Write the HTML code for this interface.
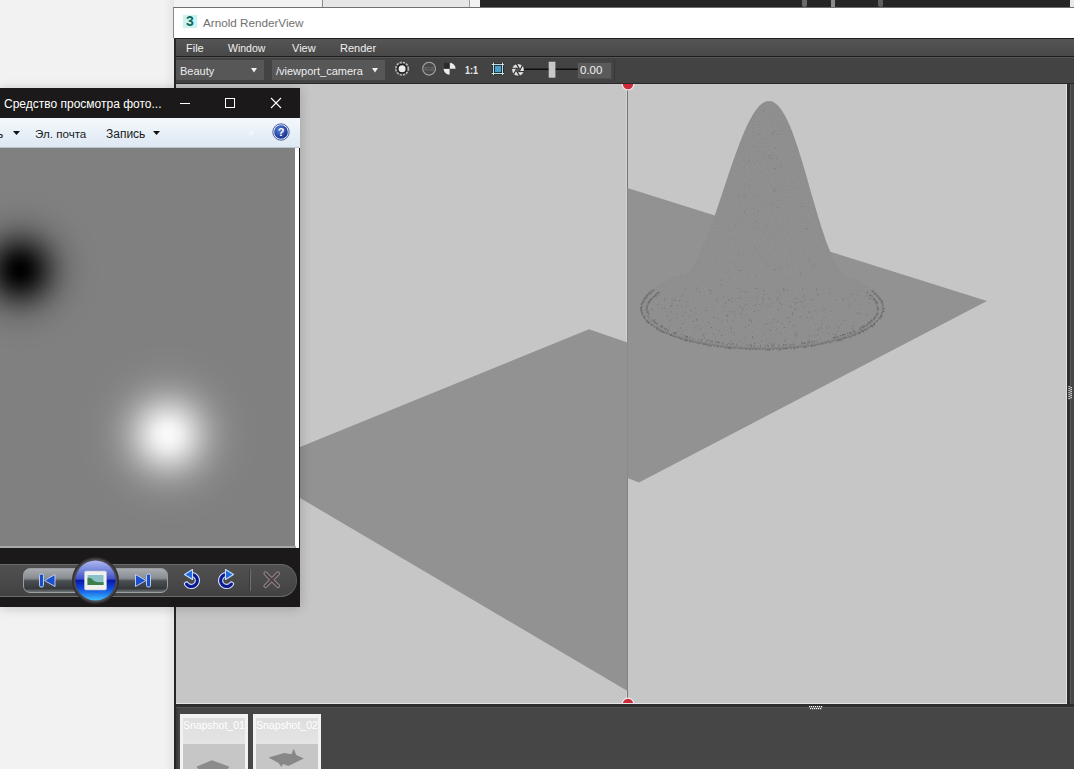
<!DOCTYPE html>
<html><head><meta charset="utf-8">
<style>
*{margin:0;padding:0;box-sizing:border-box}
html,body{width:1074px;height:769px;overflow:hidden;background:#f2f2f2;font-family:"Liberation Sans",sans-serif}
.a{position:absolute}
.t{position:absolute;white-space:nowrap;line-height:1}
</style></head><body>
<!-- ===== desktop background ===== -->
<div class="a" style="left:0;top:0;width:1074px;height:769px;background:#f2f2f2"></div>
<div class="a" style="left:322px;top:0;width:148px;height:8px;background:#e6e6e6;border-left:1px solid #8c8c8c;border-right:1px solid #9c9c9c"></div>
<div class="a" style="left:480px;top:0;width:590px;height:8px;background:#252525;border-bottom:1px solid #111"></div>
<div class="a" style="left:1070px;top:0;width:4px;height:8px;background:#e8e8e8"></div>
<div class="a" style="left:802px;top:0;width:5px;height:7px;background:#6a6a6a;border-radius:0 0 3px 3px"></div>
<div class="a" style="left:831px;top:0;width:4px;height:7px;background:#8a8a8a"></div>
<div class="a" style="left:878px;top:0;width:5px;height:7px;background:#5e5e5e;border-radius:0 0 3px 3px"></div>

<!-- ===== Arnold window ===== -->
<div class="a" style="left:164px;top:0;width:10px;height:769px;background:linear-gradient(90deg,rgba(0,0,0,0),rgba(0,0,0,0.05))"></div>
<div class="a" style="left:174px;top:38px;width:900px;height:731px;background:#474747;border-left:2px solid #262626"></div>
<div class="a" style="left:173px;top:7px;width:901px;height:31px;background:#fff;border-left:1px solid #8a8a8a;border-top:1px solid #707070"></div>
<!-- app icon -->
<div class="a" style="left:183px;top:15px;width:14px;height:13px;background:#cdf2ef;box-shadow:0 0 1px #dff"></div>
<div class="t" style="left:186px;top:14px;font-size:14px;font-weight:bold;color:#0a6e62">3</div>
<div class="t" style="left:203px;top:17px;font-size:11.7px;color:#707070">Arnold RenderView</div>
<!-- menu bar -->
<div class="a" style="left:176px;top:38px;width:898px;height:19px;background:linear-gradient(#555,#484848);border-top:1px solid #1e1e1e;border-bottom:1px solid #1e1e1e"></div>
<div class="t" style="left:186px;top:43px;font-size:11px;color:#f0f0f0">File</div>
<div class="t" style="left:228px;top:43px;font-size:10.5px;color:#f0f0f0">Window</div>
<div class="t" style="left:292px;top:43px;font-size:11px;color:#f0f0f0">View</div>
<div class="t" style="left:340px;top:43px;font-size:11px;color:#f0f0f0">Render</div>
<!-- toolbar -->
<div class="a" style="left:176px;top:57px;width:898px;height:27px;background:#434343;border-top:1px solid #555;border-bottom:1px solid #2a2a2a"></div>
<div class="a" style="left:614px;top:59px;width:1px;height:22px;background:#383838"></div>
<div class="a" style="left:176px;top:60px;width:88px;height:20px;background:#575757"></div>
<div class="t" style="left:180px;top:66px;font-size:11px;color:#eee">Beauty</div>
<svg class="a" style="left:251px;top:68px" width="6" height="5"><polygon points="0,0 6,0 3,4.5" fill="#f0f0f0"/></svg>
<div class="a" style="left:272px;top:60px;width:113px;height:20px;background:#575757"></div>
<div class="t" style="left:276px;top:66px;font-size:11px;color:#eee">/viewport_camera</div>
<svg class="a" style="left:372px;top:68px" width="6" height="5"><polygon points="0,0 6,0 3,4.5" fill="#f0f0f0"/></svg>
<!-- toolbar icons -->
<svg class="a" style="left:390px;top:57px" width="240" height="27">
 <circle cx="12.1" cy="11.7" r="6.3" fill="none" stroke="#b8b8b8" stroke-width="1.6" stroke-dasharray="2.2 1.1"/>
 <circle cx="12.1" cy="11.7" r="4.9" fill="#1e1e1e"/>
 <circle cx="12.1" cy="11.7" r="3.5" fill="#ececec"/>
 <circle cx="39.1" cy="11.7" r="6.4" fill="#4a4a4a" stroke="#a8a8a8" stroke-width="1.1"/>
 <text x="39.1" y="13.5" font-size="4.5" fill="#777" text-anchor="middle" font-family="Liberation Sans">RGB</text>
 <path d="M59.6 11.7 V5.7 A6 6 0 0 1 65.6 11.7 Z M59.6 11.7 H53.6 A6 6 0 0 0 59.6 17.7 Z" fill="#ececec"/>
 <path d="M59.6 11.7 V5.7 H54.2 V11.7 Z" fill="#2a2a2a"/>
 <text x="75" y="16.5" font-size="10.5" font-weight="bold" fill="#e8e8e8" font-family="Liberation Sans" textLength="13" lengthAdjust="spacingAndGlyphs">1:1</text>
 <path d="M101.7 7.4h12.3M101.7 16.6h12.3M103.4 5.5v12.7M112.6 5.5v12.7" stroke="#111" stroke-width="2.4"/>
 <path d="M101.7 7.4h12.3M101.7 16.6h12.3M103.4 5.5v12.7M112.6 5.5v12.7" stroke="#d8f4f2" stroke-width="1"/>
 <rect x="104.6" y="8.6" width="6.8" height="6.8" fill="#4a9ec8" stroke="#0a2a40" stroke-width="0.6"/>
 <circle cx="128" cy="12.9" r="6.2" fill="#e2e2e2" stroke="#2a2a2a" stroke-width="0.6"/>
 <path d="M133.99 14.50L126.74 14.70 M129.60 18.89L125.81 12.71 M123.62 17.28L127.07 10.91 M122.01 11.30L129.26 11.10 M126.40 6.91L130.19 13.09 M132.38 8.52L128.93 14.89" stroke="#2a2a2a" stroke-width="1.1"/>
 <circle cx="128" cy="12.9" r="1.6" fill="#555"/>
 <rect x="134" y="11.5" width="54" height="1.5" fill="#111"/>
 <rect x="158.7" y="4.7" width="6.7" height="16" fill="#c8c8c8"/>
 <rect x="187.8" y="5.8" width="33.5" height="15.7" fill="#5a5a5a"/>
</svg>
<div class="t" style="left:580px;top:65px;font-size:11.5px;color:#f0f0f0">0.00</div>

<!-- ===== viewport ===== -->
<div class="a" style="left:176px;top:84px;width:891px;height:620px;background:#c6c6c6"></div>
<svg class="a" style="left:0;top:0" width="1074" height="769">
 <defs>
  <clipPath id="vp"><rect x="176" y="84" width="891" height="619.5"/></clipPath>
  <filter id="nz" x="0" y="0" width="100%" height="100%"><feTurbulence type="fractalNoise" baseFrequency="0.7" numOctaves="2" seed="7"/><feColorMatrix values="0 0 0 0 0.3  0 0 0 0 0.3  0 0 0 0 0.3  0 0 0 -9 5.2"/><feComposite in2="SourceGraphic" operator="in"/></filter>
 </defs>
 <g clip-path="url(#vp)">
 <rect x="627" y="84" width="1" height="620" fill="#767676"/>
 <rect x="626" y="84" width="1" height="620" fill="#d2d2d2"/>
 <polygon points="589,329.3 627.5,342.4 627.5,691 248.8,467.8" fill="#929292"/>
 <polygon points="627.5,188 987,301 639,482.5 627.5,478" fill="#929292"/>
 <path id="cone" d="M659.7 296.0 L672.6 290.0 L683.7 280.0 L692.2 268.0 L699.1 255.0 L705.7 240.0 L711.4 225.0 L716.7 210.0 L721.4 196.0 L725.7 183.0 L729.7 171.0 L733.5 160.0 L737.1 150.0 L740.5 141.0 L743.8 133.0 L746.9 126.0 L749.9 120.0 L752.7 115.0 L755.3 111.0 L757.6 108.0 L759.4 106.0 L761.6 104.0 L763.0 103.0 L764.8 102.0 L765.7 101.6 L766.7 101.3 L771.3 101.3 L772.2 101.6 L773.2 102.0 L774.9 103.0 L776.2 104.0 L778.3 106.0 L780.0 108.0 L782.2 111.0 L784.6 115.0 L787.2 120.0 L789.9 126.0 L792.7 133.0 L795.5 141.0 L798.5 150.0 L801.6 160.0 L804.9 171.0 L808.3 183.0 L812.0 196.0 L816.1 210.0 L820.6 225.0 L825.6 240.0 L831.5 255.0 L837.8 268.0 L845.7 280.0 L856.3 290.0 L868.9 296.0 Z" fill="#8d8d8d"/><ellipse cx="762" cy="306" rx="121" ry="42" fill="#8d8d8d"/>
 <g filter="url(#nz)" opacity="0.55"><path d="M659.7 296.0 L672.6 290.0 L683.7 280.0 L692.2 268.0 L699.1 255.0 L705.7 240.0 L711.4 225.0 L716.7 210.0 L721.4 196.0 L725.7 183.0 L729.7 171.0 L733.5 160.0 L737.1 150.0 L740.5 141.0 L743.8 133.0 L746.9 126.0 L749.9 120.0 L752.7 115.0 L755.3 111.0 L757.6 108.0 L759.4 106.0 L761.6 104.0 L763.0 103.0 L764.8 102.0 L765.7 101.6 L766.7 101.3 L771.3 101.3 L772.2 101.6 L773.2 102.0 L774.9 103.0 L776.2 104.0 L778.3 106.0 L780.0 108.0 L782.2 111.0 L784.6 115.0 L787.2 120.0 L789.9 126.0 L792.7 133.0 L795.5 141.0 L798.5 150.0 L801.6 160.0 L804.9 171.0 L808.3 183.0 L812.0 196.0 L816.1 210.0 L820.6 225.0 L825.6 240.0 L831.5 255.0 L837.8 268.0 L845.7 280.0 L856.3 290.0 L868.9 296.0 Z" fill="#000"/><ellipse cx="762" cy="306" rx="121" ry="42" fill="#000"/></g>
 <path d="M871.7 290.7 A121 41 0 1 1 652.3 290.7" fill="none" stroke="#747474" stroke-width="1.4" stroke-dasharray="2.5 1"/>
 <path d="M866.5 295 A115.5 37 0 1 1 657.5 295" fill="none" stroke="#7a7a7a" stroke-width="1" stroke-dasharray="2 1.5"/>
 <g id="spk"><rect x="675.5" y="317.0" width="1" height="1" fill="#7a7a7a"/><rect x="655.2" y="319.3" width="1" height="1" fill="#727272"/><rect x="796.6" y="334.9" width="1" height="1" fill="#808080"/><rect x="722.6" y="296.4" width="1" height="1" fill="#7a7a7a"/><rect x="750.0" y="319.7" width="1" height="1" fill="#828282"/><rect x="697.3" y="324.8" width="1" height="1" fill="#7f7f7f"/><rect x="776.9" y="299.0" width="1" height="1" fill="#6d6d6d"/><rect x="783.8" y="326.8" width="1" height="1" fill="#6c6c6c"/><rect x="717.0" y="298.2" width="1" height="1" fill="#737373"/><rect x="740.7" y="348.3" width="1" height="1" fill="#6e6e6e"/><rect x="770.3" y="329.9" width="1" height="1" fill="#6e6e6e"/><rect x="725.3" y="302.8" width="1" height="1" fill="#6f6f6f"/><rect x="869.5" y="298.2" width="1" height="1" fill="#6c6c6c"/><rect x="788.5" y="346.4" width="1" height="1" fill="#6d6d6d"/><rect x="644.3" y="315.6" width="1" height="1" fill="#787878"/><rect x="682.3" y="322.9" width="1" height="1" fill="#727272"/><rect x="821.6" y="320.3" width="1" height="1" fill="#797979"/><rect x="764.1" y="293.9" width="1" height="1" fill="#737373"/><rect x="758.6" y="303.9" width="1" height="1" fill="#7a7a7a"/><rect x="776.9" y="291.5" width="1" height="1" fill="#7d7d7d"/><rect x="794.6" y="335.1" width="1" height="1" fill="#707070"/><rect x="696.5" y="320.3" width="1" height="1" fill="#787878"/><rect x="713.0" y="317.0" width="1" height="1" fill="#747474"/><rect x="814.0" y="310.2" width="1" height="1" fill="#7f7f7f"/><rect x="737.9" y="297.9" width="1" height="1" fill="#707070"/><rect x="776.1" y="328.3" width="1" height="1" fill="#7f7f7f"/><rect x="730.6" y="327.6" width="1" height="1" fill="#6e6e6e"/><rect x="811.4" y="316.4" width="1" height="1" fill="#808080"/><rect x="766.1" y="339.8" width="1" height="1" fill="#777777"/><rect x="730.9" y="297.8" width="1" height="1" fill="#7e7e7e"/><rect x="670.8" y="311.2" width="1" height="1" fill="#787878"/><rect x="781.5" y="322.7" width="1" height="1" fill="#737373"/><rect x="787.0" y="289.4" width="1" height="1" fill="#727272"/><rect x="814.2" y="335.3" width="1" height="1" fill="#7d7d7d"/><rect x="800.8" y="345.7" width="1" height="1" fill="#7b7b7b"/><rect x="699.5" y="291.9" width="1" height="1" fill="#6f6f6f"/><rect x="829.1" y="326.6" width="1" height="1" fill="#747474"/><rect x="769.4" y="342.3" width="1" height="1" fill="#747474"/><rect x="660.9" y="326.6" width="1" height="1" fill="#7b7b7b"/><rect x="748.3" y="324.5" width="1" height="1" fill="#6e6e6e"/><rect x="820.7" y="328.2" width="1" height="1" fill="#808080"/><rect x="740.1" y="346.6" width="1" height="1" fill="#727272"/><rect x="761.8" y="297.2" width="1" height="1" fill="#797979"/><rect x="734.0" y="311.4" width="1" height="1" fill="#717171"/><rect x="744.4" y="337.3" width="1" height="1" fill="#707070"/><rect x="799.7" y="316.3" width="1" height="1" fill="#7a7a7a"/><rect x="859.3" y="303.9" width="1" height="1" fill="#828282"/><rect x="645.4" y="302.5" width="1" height="1" fill="#7e7e7e"/><rect x="777.8" y="309.2" width="1" height="1" fill="#777777"/><rect x="857.7" y="312.4" width="1" height="1" fill="#7b7b7b"/><rect x="823.5" y="317.4" width="1" height="1" fill="#707070"/><rect x="795.2" y="308.0" width="1" height="1" fill="#7d7d7d"/><rect x="744.8" y="314.4" width="1" height="1" fill="#828282"/><rect x="843.5" y="337.3" width="1" height="1" fill="#767676"/><rect x="702.2" y="335.2" width="1" height="1" fill="#6e6e6e"/><rect x="815.9" y="288.8" width="1" height="1" fill="#6c6c6c"/><rect x="709.1" y="290.1" width="1" height="1" fill="#7e7e7e"/><rect x="794.4" y="308.9" width="1" height="1" fill="#6e6e6e"/><rect x="682.7" y="330.7" width="1" height="1" fill="#7e7e7e"/><rect x="682.6" y="315.3" width="1" height="1" fill="#7d7d7d"/><rect x="852.6" y="325.8" width="1" height="1" fill="#6c6c6c"/><rect x="748.8" y="319.3" width="1" height="1" fill="#6c6c6c"/><rect x="774.5" y="342.0" width="1" height="1" fill="#7b7b7b"/><rect x="647.9" y="311.3" width="1" height="1" fill="#777777"/><rect x="730.6" y="340.0" width="1" height="1" fill="#727272"/><rect x="657.6" y="303.9" width="1" height="1" fill="#767676"/><rect x="815.8" y="293.3" width="1" height="1" fill="#818181"/><rect x="761.6" y="340.7" width="1" height="1" fill="#727272"/><rect x="816.8" y="290.6" width="1" height="1" fill="#7e7e7e"/><rect x="810.7" y="299.0" width="1" height="1" fill="#707070"/><rect x="651.3" y="308.8" width="1" height="1" fill="#6d6d6d"/><rect x="753.7" y="324.6" width="1" height="1" fill="#7a7a7a"/><rect x="647.5" y="315.1" width="1" height="1" fill="#797979"/><rect x="697.4" y="327.9" width="1" height="1" fill="#818181"/><rect x="717.7" y="342.4" width="1" height="1" fill="#7f7f7f"/><rect x="730.4" y="311.3" width="1" height="1" fill="#6d6d6d"/><rect x="745.4" y="339.5" width="1" height="1" fill="#818181"/><rect x="723.0" y="342.0" width="1" height="1" fill="#6c6c6c"/><rect x="801.1" y="341.4" width="1" height="1" fill="#747474"/><rect x="765.6" y="323.3" width="1" height="1" fill="#6d6d6d"/><rect x="802.9" y="306.6" width="1" height="1" fill="#6f6f6f"/><rect x="740.4" y="291.2" width="1" height="1" fill="#7b7b7b"/><rect x="758.1" y="342.6" width="1" height="1" fill="#7b7b7b"/><rect x="739.5" y="306.3" width="1" height="1" fill="#737373"/><rect x="752.0" y="331.9" width="1" height="1" fill="#828282"/><rect x="842.9" y="298.5" width="1" height="1" fill="#717171"/><rect x="677.5" y="330.6" width="1" height="1" fill="#737373"/><rect x="861.7" y="328.6" width="1" height="1" fill="#787878"/><rect x="817.8" y="328.1" width="1" height="1" fill="#808080"/><rect x="769.5" y="305.8" width="1" height="1" fill="#7d7d7d"/><rect x="659.0" y="291.9" width="1" height="1" fill="#767676"/><rect x="666.9" y="315.5" width="1" height="1" fill="#727272"/><rect x="853.5" y="330.2" width="1" height="1" fill="#808080"/><rect x="799.8" y="301.4" width="1" height="1" fill="#737373"/><rect x="849.8" y="303.7" width="1" height="1" fill="#767676"/><rect x="754.4" y="342.7" width="1" height="1" fill="#6c6c6c"/><rect x="741.8" y="317.6" width="1" height="1" fill="#7a7a7a"/><rect x="719.1" y="330.3" width="1" height="1" fill="#747474"/><rect x="741.7" y="308.5" width="1" height="1" fill="#6e6e6e"/><rect x="741.6" y="311.3" width="1" height="1" fill="#7d7d7d"/><rect x="707.3" y="339.3" width="1" height="1" fill="#707070"/><rect x="643.1" y="315.5" width="1" height="1" fill="#7c7c7c"/><rect x="842.0" y="298.4" width="1" height="1" fill="#828282"/><rect x="810.8" y="317.9" width="1" height="1" fill="#7c7c7c"/><rect x="659.1" y="294.5" width="1" height="1" fill="#7d7d7d"/><rect x="733.8" y="331.4" width="1" height="1" fill="#7f7f7f"/><rect x="790.9" y="344.5" width="1" height="1" fill="#7d7d7d"/><rect x="671.5" y="303.3" width="1" height="1" fill="#727272"/><rect x="727.3" y="315.3" width="1" height="1" fill="#6c6c6c"/><rect x="746.1" y="303.8" width="1" height="1" fill="#6d6d6d"/><rect x="685.8" y="305.4" width="1" height="1" fill="#7e7e7e"/><rect x="788.6" y="316.7" width="1" height="1" fill="#717171"/><rect x="843.3" y="320.1" width="1" height="1" fill="#797979"/><rect x="857.1" y="290.5" width="1" height="1" fill="#787878"/><rect x="752.0" y="336.0" width="1" height="1" fill="#707070"/><rect x="700.7" y="340.9" width="1" height="1" fill="#7b7b7b"/><rect x="722.6" y="305.9" width="1" height="1" fill="#797979"/><rect x="835.4" y="334.3" width="1" height="1" fill="#6c6c6c"/><rect x="808.5" y="311.6" width="1" height="1" fill="#6c6c6c"/><rect x="703.5" y="333.5" width="1" height="1" fill="#6f6f6f"/><rect x="669.7" y="308.1" width="1" height="1" fill="#7c7c7c"/><rect x="857.2" y="312.7" width="1" height="1" fill="#7c7c7c"/><rect x="773.1" y="326.7" width="1" height="1" fill="#7d7d7d"/><rect x="773.3" y="343.1" width="1" height="1" fill="#777777"/><rect x="817.7" y="294.8" width="1" height="1" fill="#767676"/><rect x="803.3" y="296.5" width="1" height="1" fill="#727272"/><rect x="795.7" y="298.3" width="1" height="1" fill="#737373"/><rect x="786.2" y="317.0" width="1" height="1" fill="#787878"/><rect x="852.5" y="329.4" width="1" height="1" fill="#797979"/><rect x="664.1" y="298.8" width="1" height="1" fill="#727272"/><rect x="680.0" y="327.5" width="1" height="1" fill="#6c6c6c"/><rect x="837.2" y="325.6" width="1" height="1" fill="#777777"/><rect x="826.4" y="327.3" width="1" height="1" fill="#767676"/><rect x="661.8" y="307.4" width="1" height="1" fill="#727272"/><rect x="866.4" y="313.4" width="1" height="1" fill="#7f7f7f"/><rect x="671.1" y="305.1" width="1" height="1" fill="#707070"/><rect x="777.2" y="320.9" width="1" height="1" fill="#717171"/><rect x="795.5" y="302.4" width="1" height="1" fill="#6d6d6d"/><rect x="828.3" y="333.3" width="1" height="1" fill="#6e6e6e"/><rect x="677.0" y="314.1" width="1" height="1" fill="#797979"/><rect x="780.3" y="332.3" width="1" height="1" fill="#808080"/><rect x="796.1" y="333.1" width="1" height="1" fill="#777777"/><rect x="717.7" y="318.2" width="1" height="1" fill="#717171"/><rect x="851.2" y="328.5" width="1" height="1" fill="#767676"/><rect x="709.1" y="289.1" width="1" height="1" fill="#7f7f7f"/><rect x="795.5" y="337.2" width="1" height="1" fill="#767676"/><rect x="782.8" y="288.4" width="1" height="1" fill="#6f6f6f"/><rect x="756.5" y="297.3" width="1" height="1" fill="#767676"/><rect x="749.7" y="320.3" width="1" height="1" fill="#777777"/><rect x="876.8" y="305.7" width="1" height="1" fill="#6d6d6d"/><rect x="775.2" y="347.6" width="1" height="1" fill="#818181"/><rect x="745.0" y="326.2" width="1" height="1" fill="#787878"/><rect x="682.0" y="295.3" width="1" height="1" fill="#787878"/><rect x="677.0" y="305.3" width="1" height="1" fill="#727272"/><rect x="780.1" y="307.2" width="1" height="1" fill="#7f7f7f"/><rect x="807.8" y="320.5" width="1" height="1" fill="#7a7a7a"/><rect x="739.9" y="313.3" width="1" height="1" fill="#727272"/><rect x="754.5" y="304.6" width="1" height="1" fill="#747474"/><rect x="761.4" y="347.0" width="1" height="1" fill="#7d7d7d"/><rect x="686.5" y="301.3" width="1" height="1" fill="#7c7c7c"/><rect x="652.1" y="291.1" width="1" height="1" fill="#808080"/><rect x="670.7" y="319.3" width="1" height="1" fill="#7d7d7d"/><rect x="874.0" y="319.1" width="1" height="1" fill="#717171"/><rect x="672.2" y="334.5" width="1" height="1" fill="#7b7b7b"/><rect x="671.8" y="299.7" width="1" height="1" fill="#797979"/><rect x="835.9" y="299.0" width="1" height="1" fill="#7c7c7c"/><rect x="707.6" y="321.6" width="1" height="1" fill="#7c7c7c"/><rect x="740.2" y="340.4" width="1" height="1" fill="#7d7d7d"/><rect x="851.0" y="293.7" width="1" height="1" fill="#757575"/><rect x="866.8" y="314.1" width="1" height="1" fill="#7e7e7e"/><rect x="808.2" y="312.3" width="1" height="1" fill="#818181"/><rect x="673.7" y="332.8" width="1" height="1" fill="#787878"/><rect x="876.4" y="320.6" width="1" height="1" fill="#767676"/><rect x="865.1" y="325.4" width="1" height="1" fill="#797979"/><rect x="762.9" y="299.3" width="1" height="1" fill="#6f6f6f"/><rect x="857.0" y="294.6" width="1" height="1" fill="#7a7a7a"/><rect x="835.0" y="339.6" width="1" height="1" fill="#737373"/><rect x="729.3" y="299.6" width="1" height="1" fill="#7f7f7f"/><rect x="725.9" y="315.0" width="1" height="1" fill="#6d6d6d"/><rect x="732.4" y="320.6" width="1" height="1" fill="#777777"/><rect x="669.4" y="319.8" width="1" height="1" fill="#7a7a7a"/><rect x="684.1" y="288.6" width="1" height="1" fill="#818181"/><rect x="668.6" y="325.5" width="1" height="1" fill="#7c7c7c"/><rect x="779.8" y="294.1" width="1" height="1" fill="#757575"/><rect x="756.2" y="288.1" width="1" height="1" fill="#6f6f6f"/><rect x="694.8" y="307.6" width="1" height="1" fill="#7c7c7c"/><rect x="710.7" y="290.6" width="1" height="1" fill="#747474"/><rect x="745.4" y="291.0" width="1" height="1" fill="#747474"/><rect x="763.1" y="290.1" width="1" height="1" fill="#737373"/><rect x="664.2" y="307.6" width="1" height="1" fill="#727272"/><rect x="779.4" y="302.4" width="1" height="1" fill="#6d6d6d"/><rect x="823.5" y="309.2" width="1" height="1" fill="#6c6c6c"/><rect x="734.3" y="298.8" width="1" height="1" fill="#7d7d7d"/><rect x="743.4" y="343.1" width="1" height="1" fill="#818181"/><rect x="793.1" y="324.8" width="1" height="1" fill="#777777"/><rect x="690.4" y="310.4" width="1" height="1" fill="#767676"/><rect x="704.0" y="337.4" width="1" height="1" fill="#6e6e6e"/><rect x="789.7" y="321.0" width="1" height="1" fill="#7f7f7f"/><rect x="721.1" y="335.0" width="1" height="1" fill="#717171"/><rect x="695.9" y="318.9" width="1" height="1" fill="#6f6f6f"/><rect x="695.1" y="313.5" width="1" height="1" fill="#7d7d7d"/><rect x="840.8" y="323.3" width="1" height="1" fill="#7b7b7b"/><rect x="767.2" y="304.5" width="1" height="1" fill="#757575"/><rect x="784.5" y="340.5" width="1" height="1" fill="#6e6e6e"/><rect x="803.7" y="295.0" width="1" height="1" fill="#818181"/><rect x="837.4" y="331.2" width="1" height="1" fill="#7e7e7e"/><rect x="737.4" y="288.0" width="1" height="1" fill="#7c7c7c"/><rect x="730.5" y="331.6" width="1" height="1" fill="#7c7c7c"/><rect x="762.8" y="332.7" width="1" height="1" fill="#777777"/><rect x="860.4" y="313.1" width="1" height="1" fill="#7e7e7e"/><rect x="721.4" y="319.8" width="1" height="1" fill="#7e7e7e"/><rect x="710.9" y="326.9" width="1" height="1" fill="#707070"/><rect x="808.9" y="340.0" width="1" height="1" fill="#757575"/><rect x="783.6" y="290.2" width="1" height="1" fill="#6d6d6d"/><rect x="674.3" y="299.5" width="1" height="1" fill="#6c6c6c"/><rect x="844.3" y="319.9" width="1" height="1" fill="#7d7d7d"/><rect x="791.9" y="313.9" width="1" height="1" fill="#6f6f6f"/><rect x="790.4" y="300.9" width="1" height="1" fill="#808080"/><rect x="740.5" y="297.5" width="1" height="1" fill="#808080"/><rect x="671.9" y="324.3" width="1" height="1" fill="#7b7b7b"/><rect x="699.6" y="342.4" width="1" height="1" fill="#818181"/><rect x="817.2" y="329.7" width="1" height="1" fill="#6e6e6e"/><rect x="668.9" y="327.8" width="1" height="1" fill="#818181"/><rect x="757.6" y="310.1" width="1" height="1" fill="#787878"/><rect x="855.4" y="299.4" width="1" height="1" fill="#7c7c7c"/><rect x="754.1" y="311.1" width="1" height="1" fill="#6f6f6f"/><rect x="692.9" y="320.6" width="1" height="1" fill="#707070"/><rect x="763.3" y="324.5" width="1" height="1" fill="#808080"/><rect x="726.9" y="319.8" width="1" height="1" fill="#727272"/><rect x="694.4" y="327.1" width="1" height="1" fill="#747474"/><rect x="790.9" y="306.1" width="1" height="1" fill="#757575"/><rect x="826.9" y="340.6" width="1" height="1" fill="#6d6d6d"/><rect x="762.3" y="302.6" width="1" height="1" fill="#7b7b7b"/><rect x="781.4" y="303.8" width="1" height="1" fill="#6f6f6f"/><rect x="785.4" y="331.3" width="1" height="1" fill="#7e7e7e"/><rect x="771.4" y="342.6" width="1" height="1" fill="#7f7f7f"/><rect x="681.7" y="306.5" width="1" height="1" fill="#747474"/><rect x="667.5" y="330.5" width="1" height="1" fill="#757575"/><rect x="655.8" y="296.2" width="1" height="1" fill="#7b7b7b"/><rect x="713.1" y="333.4" width="1" height="1" fill="#6e6e6e"/><rect x="705.5" y="310.1" width="1" height="1" fill="#6d6d6d"/><rect x="771.0" y="322.7" width="1" height="1" fill="#787878"/><rect x="868.6" y="302.5" width="1" height="1" fill="#747474"/><rect x="768.8" y="298.4" width="1" height="1" fill="#737373"/><rect x="829.2" y="292.6" width="1" height="1" fill="#737373"/><rect x="788.4" y="321.6" width="1" height="1" fill="#767676"/><rect x="832.8" y="338.8" width="1" height="1" fill="#7c7c7c"/><rect x="832.8" y="333.9" width="1" height="1" fill="#7f7f7f"/><rect x="752.8" y="337.8" width="1" height="1" fill="#707070"/><rect x="716.0" y="300.4" width="1" height="1" fill="#727272"/><rect x="777.2" y="297.4" width="1" height="1" fill="#747474"/><rect x="696.0" y="288.3" width="1" height="1" fill="#7b7b7b"/><rect x="749.9" y="296.9" width="1" height="1" fill="#7e7e7e"/><rect x="679.1" y="300.1" width="1" height="1" fill="#6c6c6c"/><rect x="793.6" y="301.8" width="1" height="1" fill="#7a7a7a"/><rect x="785.0" y="337.2" width="1" height="1" fill="#7c7c7c"/><rect x="644.4" y="309.5" width="1" height="1" fill="#757575"/><rect x="730.9" y="331.9" width="1" height="1" fill="#7d7d7d"/><rect x="733.6" y="334.3" width="1" height="1" fill="#828282"/><rect x="792.1" y="312.6" width="1" height="1" fill="#707070"/><rect x="821.8" y="323.9" width="1" height="1" fill="#7a7a7a"/><rect x="820.2" y="327.0" width="1" height="1" fill="#787878"/><rect x="751.0" y="321.3" width="1" height="1" fill="#6c6c6c"/><rect x="817.3" y="334.5" width="1" height="1" fill="#7d7d7d"/><rect x="806.9" y="317.2" width="1" height="1" fill="#787878"/><rect x="847.4" y="297.6" width="1" height="1" fill="#808080"/><rect x="708.0" y="340.5" width="1" height="1" fill="#6e6e6e"/><rect x="838.5" y="327.3" width="1" height="1" fill="#707070"/><rect x="794.7" y="331.5" width="1" height="1" fill="#7a7a7a"/><rect x="731.7" y="301.2" width="1" height="1" fill="#737373"/><rect x="879.8" y="316.2" width="1" height="1" fill="#797979"/><rect x="734.8" y="314.1" width="1" height="1" fill="#797979"/><rect x="802.4" y="301.2" width="1" height="1" fill="#727272"/><rect x="709.5" y="323.5" width="1" height="1" fill="#797979"/><rect x="710.3" y="292.9" width="1" height="1" fill="#737373"/><rect x="831.1" y="310.7" width="1" height="1" fill="#767676"/><rect x="733.9" y="333.5" width="1" height="1" fill="#7d7d7d"/><rect x="699.9" y="328.3" width="1" height="1" fill="#757575"/><rect x="819.7" y="338.1" width="1" height="1" fill="#757575"/><rect x="693.4" y="300.7" width="1" height="1" fill="#7c7c7c"/><rect x="670.6" y="305.4" width="1" height="1" fill="#727272"/><rect x="848.6" y="305.6" width="1" height="1" fill="#828282"/><rect x="744.0" y="305.2" width="1" height="1" fill="#818181"/><rect x="773.2" y="319.2" width="1" height="1" fill="#737373"/><rect x="684.6" y="311.7" width="1" height="1" fill="#767676"/><rect x="706.3" y="342.7" width="1" height="1" fill="#777777"/><rect x="750.5" y="346.3" width="1" height="1" fill="#7a7a7a"/><rect x="805.9" y="305.5" width="1" height="1" fill="#7e7e7e"/><rect x="674.7" y="299.7" width="1" height="1" fill="#7d7d7d"/><rect x="804.8" y="299.4" width="1" height="1" fill="#767676"/><rect x="728.0" y="299.5" width="1" height="1" fill="#6c6c6c"/><rect x="734.5" y="345.7" width="1" height="1" fill="#737373"/><rect x="809.2" y="335.4" width="1" height="1" fill="#6e6e6e"/><rect x="688.3" y="315.4" width="1" height="1" fill="#818181"/><rect x="656.1" y="327.3" width="1.2" height="1.2" fill="#747474"/><rect x="661.1" y="325.6" width="1.2" height="1.2" fill="#747474"/><rect x="883.1" y="310.8" width="1.2" height="1.2" fill="#656565"/><rect x="651.0" y="323.8" width="1.2" height="1.2" fill="#6f6f6f"/><rect x="656.2" y="322.9" width="1.2" height="1.2" fill="#717171"/><rect x="659.7" y="330.0" width="1.2" height="1.2" fill="#7a7a7a"/><rect x="663.7" y="327.5" width="1.2" height="1.2" fill="#747474"/><rect x="838.5" y="339.2" width="1.2" height="1.2" fill="#656565"/><rect x="835.3" y="336.6" width="1.2" height="1.2" fill="#707070"/><rect x="717.8" y="341.6" width="1.2" height="1.2" fill="#676767"/><rect x="643.4" y="315.9" width="1.2" height="1.2" fill="#737373"/><rect x="749.0" y="348.6" width="1.2" height="1.2" fill="#6b6b6b"/><rect x="823.3" y="343.0" width="1.2" height="1.2" fill="#787878"/><rect x="731.5" y="343.2" width="1.2" height="1.2" fill="#757575"/><rect x="725.2" y="347.4" width="1.2" height="1.2" fill="#646464"/><rect x="726.6" y="343.7" width="1.2" height="1.2" fill="#747474"/><rect x="810.9" y="345.0" width="1.2" height="1.2" fill="#646464"/><rect x="808.4" y="341.6" width="1.2" height="1.2" fill="#686868"/><rect x="648.1" y="301.0" width="1.2" height="1.2" fill="#7a7a7a"/><rect x="641.5" y="306.5" width="1.2" height="1.2" fill="#737373"/><rect x="646.7" y="307.0" width="1.2" height="1.2" fill="#757575"/><rect x="870.3" y="320.7" width="1.2" height="1.2" fill="#676767"/><rect x="858.3" y="332.8" width="1.2" height="1.2" fill="#727272"/><rect x="853.1" y="331.0" width="1.2" height="1.2" fill="#676767"/><rect x="670.6" y="334.7" width="1.2" height="1.2" fill="#797979"/><rect x="674.9" y="332.8" width="1.2" height="1.2" fill="#747474"/><rect x="640.7" y="308.5" width="1.2" height="1.2" fill="#696969"/><rect x="853.2" y="330.9" width="1.2" height="1.2" fill="#747474"/><rect x="876.3" y="302.5" width="1.2" height="1.2" fill="#717171"/><rect x="647.9" y="322.2" width="1.2" height="1.2" fill="#6b6b6b"/><rect x="653.6" y="320.0" width="1.2" height="1.2" fill="#686868"/><rect x="650.5" y="292.3" width="1.2" height="1.2" fill="#707070"/><rect x="656.1" y="293.0" width="1.2" height="1.2" fill="#666666"/><rect x="736.3" y="344.4" width="1.2" height="1.2" fill="#747474"/><rect x="655.0" y="294.5" width="1.2" height="1.2" fill="#676767"/><rect x="710.7" y="345.5" width="1.2" height="1.2" fill="#7a7a7a"/><rect x="867.6" y="327.9" width="1.2" height="1.2" fill="#737373"/><rect x="862.8" y="326.4" width="1.2" height="1.2" fill="#656565"/><rect x="728.2" y="342.8" width="1.2" height="1.2" fill="#737373"/><rect x="647.9" y="321.8" width="1.2" height="1.2" fill="#646464"/><rect x="653.3" y="320.2" width="1.2" height="1.2" fill="#757575"/><rect x="880.0" y="299.0" width="1.2" height="1.2" fill="#747474"/><rect x="655.9" y="327.6" width="1.2" height="1.2" fill="#707070"/><rect x="660.2" y="325.9" width="1.2" height="1.2" fill="#777777"/><rect x="651.0" y="324.3" width="1.2" height="1.2" fill="#6a6a6a"/><rect x="645.9" y="296.9" width="1.2" height="1.2" fill="#686868"/><rect x="650.9" y="298.2" width="1.2" height="1.2" fill="#656565"/><rect x="871.7" y="290.2" width="1.2" height="1.2" fill="#757575"/><rect x="866.6" y="291.8" width="1.2" height="1.2" fill="#656565"/><rect x="708.4" y="345.3" width="1.2" height="1.2" fill="#717171"/><rect x="711.8" y="341.1" width="1.2" height="1.2" fill="#6e6e6e"/><rect x="649.2" y="299.5" width="1.2" height="1.2" fill="#656565"/><rect x="663.4" y="332.0" width="1.2" height="1.2" fill="#696969"/><rect x="667.3" y="329.6" width="1.2" height="1.2" fill="#707070"/><rect x="818.9" y="343.9" width="1.2" height="1.2" fill="#757575"/><rect x="771.8" y="349.2" width="1.2" height="1.2" fill="#737373"/><rect x="771.8" y="345.1" width="1.2" height="1.2" fill="#737373"/><rect x="874.0" y="323.3" width="1.2" height="1.2" fill="#6f6f6f"/><rect x="705.5" y="344.2" width="1.2" height="1.2" fill="#767676"/><rect x="669.4" y="334.0" width="1.2" height="1.2" fill="#6f6f6f"/><rect x="673.4" y="332.3" width="1.2" height="1.2" fill="#676767"/><rect x="874.8" y="292.8" width="1.2" height="1.2" fill="#707070"/><rect x="870.1" y="294.7" width="1.2" height="1.2" fill="#656565"/><rect x="844.4" y="333.8" width="1.2" height="1.2" fill="#686868"/><rect x="876.7" y="295.1" width="1.2" height="1.2" fill="#686868"/><rect x="871.6" y="296.1" width="1.2" height="1.2" fill="#727272"/><rect x="686.4" y="339.8" width="1.2" height="1.2" fill="#7a7a7a"/><rect x="689.7" y="337.0" width="1.2" height="1.2" fill="#6f6f6f"/><rect x="870.0" y="326.0" width="1.2" height="1.2" fill="#656565"/><rect x="659.7" y="330.5" width="1.2" height="1.2" fill="#6d6d6d"/><rect x="875.5" y="300.9" width="1.2" height="1.2" fill="#6f6f6f"/><rect x="863.4" y="325.5" width="1.2" height="1.2" fill="#656565"/><rect x="767.0" y="344.6" width="1.2" height="1.2" fill="#707070"/><rect x="870.1" y="321.3" width="1.2" height="1.2" fill="#6e6e6e"/><rect x="646.5" y="305.6" width="1.2" height="1.2" fill="#6d6d6d"/><rect x="674.3" y="336.1" width="1.2" height="1.2" fill="#666666"/><rect x="858.8" y="332.6" width="1.2" height="1.2" fill="#6e6e6e"/><rect x="881.3" y="301.4" width="1.2" height="1.2" fill="#6d6d6d"/><rect x="876.3" y="301.8" width="1.2" height="1.2" fill="#737373"/><rect x="817.0" y="344.0" width="1.2" height="1.2" fill="#7a7a7a"/><rect x="804.3" y="346.8" width="1.2" height="1.2" fill="#727272"/><rect x="803.2" y="342.1" width="1.2" height="1.2" fill="#686868"/><rect x="680.3" y="338.2" width="1.2" height="1.2" fill="#646464"/><rect x="683.6" y="335.0" width="1.2" height="1.2" fill="#797979"/><rect x="872.0" y="326.0" width="1.2" height="1.2" fill="#646464"/><rect x="866.5" y="323.9" width="1.2" height="1.2" fill="#757575"/><rect x="680.9" y="333.9" width="1.2" height="1.2" fill="#7a7a7a"/><rect x="873.5" y="323.2" width="1.2" height="1.2" fill="#696969"/><rect x="869.0" y="322.1" width="1.2" height="1.2" fill="#767676"/><rect x="851.4" y="335.8" width="1.2" height="1.2" fill="#737373"/><rect x="847.2" y="332.7" width="1.2" height="1.2" fill="#696969"/><rect x="842.4" y="334.1" width="1.2" height="1.2" fill="#777777"/><rect x="646.7" y="311.3" width="1.2" height="1.2" fill="#7a7a7a"/><rect x="811.0" y="341.3" width="1.2" height="1.2" fill="#6e6e6e"/><rect x="642.1" y="312.9" width="1.2" height="1.2" fill="#717171"/><rect x="876.9" y="309.8" width="1.2" height="1.2" fill="#777777"/><rect x="685.1" y="339.2" width="1.2" height="1.2" fill="#767676"/><rect x="655.1" y="322.0" width="1.2" height="1.2" fill="#797979"/><rect x="873.3" y="298.5" width="1.2" height="1.2" fill="#757575"/><rect x="651.5" y="290.6" width="1.2" height="1.2" fill="#757575"/><rect x="879.4" y="318.3" width="1.2" height="1.2" fill="#787878"/><rect x="874.0" y="317.0" width="1.2" height="1.2" fill="#686868"/><rect x="649.6" y="293.1" width="1.2" height="1.2" fill="#686868"/><rect x="654.8" y="294.6" width="1.2" height="1.2" fill="#6c6c6c"/><rect x="640.6" y="309.8" width="1.2" height="1.2" fill="#6c6c6c"/><rect x="646.1" y="309.4" width="1.2" height="1.2" fill="#6c6c6c"/><rect x="841.3" y="338.9" width="1.2" height="1.2" fill="#757575"/><rect x="837.5" y="336.3" width="1.2" height="1.2" fill="#6d6d6d"/><rect x="685.0" y="339.2" width="1.2" height="1.2" fill="#6a6a6a"/><rect x="805.5" y="346.3" width="1.2" height="1.2" fill="#757575"/><rect x="803.8" y="342.7" width="1.2" height="1.2" fill="#777777"/><rect x="863.6" y="329.8" width="1.2" height="1.2" fill="#727272"/><rect x="859.8" y="327.4" width="1.2" height="1.2" fill="#646464"/><rect x="644.3" y="298.5" width="1.2" height="1.2" fill="#646464"/><rect x="845.5" y="337.1" width="1.2" height="1.2" fill="#6f6f6f"/><rect x="842.3" y="335.0" width="1.2" height="1.2" fill="#737373"/><rect x="660.6" y="325.3" width="1.2" height="1.2" fill="#7a7a7a"/><rect x="872.7" y="291.9" width="1.2" height="1.2" fill="#747474"/><rect x="647.1" y="320.5" width="1.2" height="1.2" fill="#6c6c6c"/><rect x="652.4" y="319.6" width="1.2" height="1.2" fill="#6c6c6c"/><rect x="833.8" y="337.1" width="1.2" height="1.2" fill="#797979"/><rect x="873.8" y="323.2" width="1.2" height="1.2" fill="#696969"/><rect x="868.6" y="321.8" width="1.2" height="1.2" fill="#707070"/><rect x="656.2" y="327.6" width="1.2" height="1.2" fill="#767676"/><rect x="662.0" y="326.1" width="1.2" height="1.2" fill="#6b6b6b"/><rect x="646.5" y="320.9" width="1.2" height="1.2" fill="#696969"/><rect x="750.0" y="349.0" width="1.2" height="1.2" fill="#787878"/><rect x="750.4" y="344.6" width="1.2" height="1.2" fill="#727272"/><rect x="647.6" y="312.4" width="1.2" height="1.2" fill="#7a7a7a"/><rect x="661.0" y="331.0" width="1.2" height="1.2" fill="#747474"/><rect x="665.8" y="328.5" width="1.2" height="1.2" fill="#747474"/><rect x="641.9" y="302.6" width="1.2" height="1.2" fill="#656565"/><rect x="647.9" y="302.9" width="1.2" height="1.2" fill="#727272"/><rect x="839.6" y="339.1" width="1.2" height="1.2" fill="#737373"/><rect x="807.1" y="342.1" width="1.2" height="1.2" fill="#6b6b6b"/><rect x="881.6" y="312.8" width="1.2" height="1.2" fill="#6c6c6c"/><rect x="877.0" y="312.9" width="1.2" height="1.2" fill="#6c6c6c"/><rect x="753.0" y="348.3" width="1.2" height="1.2" fill="#717171"/><rect x="753.5" y="345.1" width="1.2" height="1.2" fill="#666666"/><rect x="883.3" y="307.8" width="1.2" height="1.2" fill="#666666"/><rect x="648.1" y="313.4" width="1.2" height="1.2" fill="#686868"/><rect x="646.6" y="321.1" width="1.2" height="1.2" fill="#6b6b6b"/><rect x="882.8" y="309.4" width="1.2" height="1.2" fill="#777777"/><rect x="877.5" y="308.4" width="1.2" height="1.2" fill="#787878"/><rect x="665.9" y="332.8" width="1.2" height="1.2" fill="#646464"/><rect x="689.4" y="341.2" width="1.2" height="1.2" fill="#696969"/><rect x="777.9" y="349.2" width="1.2" height="1.2" fill="#777777"/><rect x="846.5" y="336.8" width="1.2" height="1.2" fill="#7a7a7a"/><rect x="842.9" y="334.2" width="1.2" height="1.2" fill="#686868"/><rect x="881.3" y="301.6" width="1.2" height="1.2" fill="#6c6c6c"/><rect x="876.0" y="302.6" width="1.2" height="1.2" fill="#6f6f6f"/><rect x="755.2" y="348.5" width="1.2" height="1.2" fill="#676767"/><rect x="783.2" y="344.5" width="1.2" height="1.2" fill="#727272"/><rect x="697.1" y="342.7" width="1.2" height="1.2" fill="#797979"/><rect x="865.4" y="329.5" width="1.2" height="1.2" fill="#6c6c6c"/><rect x="860.9" y="326.5" width="1.2" height="1.2" fill="#767676"/><rect x="877.1" y="307.3" width="1.2" height="1.2" fill="#646464"/><rect x="870.1" y="295.1" width="1.2" height="1.2" fill="#6e6e6e"/><rect x="771.2" y="344.3" width="1.2" height="1.2" fill="#707070"/><rect x="794.2" y="347.1" width="1.2" height="1.2" fill="#656565"/><rect x="792.7" y="343.5" width="1.2" height="1.2" fill="#787878"/><rect x="643.0" y="300.8" width="1.2" height="1.2" fill="#686868"/><rect x="647.8" y="301.9" width="1.2" height="1.2" fill="#646464"/><rect x="662.0" y="331.2" width="1.2" height="1.2" fill="#676767"/><rect x="665.8" y="328.5" width="1.2" height="1.2" fill="#6f6f6f"/><rect x="649.3" y="299.8" width="1.2" height="1.2" fill="#757575"/><rect x="654.0" y="295.5" width="1.2" height="1.2" fill="#666666"/><rect x="728.7" y="347.5" width="1.2" height="1.2" fill="#6d6d6d"/><rect x="730.4" y="343.7" width="1.2" height="1.2" fill="#727272"/><rect x="879.7" y="298.7" width="1.2" height="1.2" fill="#727272"/><rect x="874.9" y="299.9" width="1.2" height="1.2" fill="#747474"/><rect x="875.6" y="314.6" width="1.2" height="1.2" fill="#7a7a7a"/><rect x="645.9" y="295.3" width="1.2" height="1.2" fill="#676767"/><rect x="670.4" y="334.2" width="1.2" height="1.2" fill="#676767"/><rect x="675.0" y="332.2" width="1.2" height="1.2" fill="#656565"/><rect x="813.8" y="345.0" width="1.2" height="1.2" fill="#797979"/><rect x="839.4" y="340.0" width="1.2" height="1.2" fill="#686868"/><rect x="835.7" y="337.0" width="1.2" height="1.2" fill="#707070"/><rect x="703.3" y="343.5" width="1.2" height="1.2" fill="#666666"/><rect x="705.8" y="340.2" width="1.2" height="1.2" fill="#717171"/><rect x="837.0" y="340.1" width="1.2" height="1.2" fill="#696969"/><rect x="833.9" y="336.8" width="1.2" height="1.2" fill="#6b6b6b"/><rect x="686.8" y="336.7" width="1.2" height="1.2" fill="#747474"/><rect x="659.1" y="329.8" width="1.2" height="1.2" fill="#676767"/><rect x="664.4" y="328.3" width="1.2" height="1.2" fill="#6f6f6f"/><rect x="868.1" y="321.9" width="1.2" height="1.2" fill="#6f6f6f"/><rect x="879.4" y="298.2" width="1.2" height="1.2" fill="#717171"/><rect x="821.4" y="343.3" width="1.2" height="1.2" fill="#707070"/><rect x="644.0" y="317.8" width="1.2" height="1.2" fill="#6d6d6d"/><rect x="874.8" y="300.0" width="1.2" height="1.2" fill="#6e6e6e"/><rect x="698.2" y="343.0" width="1.2" height="1.2" fill="#767676"/><rect x="701.0" y="339.3" width="1.2" height="1.2" fill="#6e6e6e"/><rect x="876.6" y="302.4" width="1.2" height="1.2" fill="#727272"/><rect x="686.7" y="336.2" width="1.2" height="1.2" fill="#676767"/><rect x="645.9" y="297.1" width="1.2" height="1.2" fill="#7a7a7a"/><rect x="650.6" y="298.5" width="1.2" height="1.2" fill="#757575"/><rect x="877.3" y="307.9" width="1.2" height="1.2" fill="#676767"/><rect x="881.0" y="315.7" width="1.2" height="1.2" fill="#707070"/><rect x="875.9" y="314.5" width="1.2" height="1.2" fill="#717171"/><rect x="678.4" y="337.1" width="1.2" height="1.2" fill="#696969"/><rect x="841.4" y="339.2" width="1.2" height="1.2" fill="#707070"/><rect x="837.4" y="335.9" width="1.2" height="1.2" fill="#767676"/><rect x="719.8" y="346.0" width="1.2" height="1.2" fill="#7a7a7a"/><rect x="835.7" y="336.7" width="1.2" height="1.2" fill="#767676"/><rect x="862.9" y="331.0" width="1.2" height="1.2" fill="#666666"/><rect x="859.2" y="328.8" width="1.2" height="1.2" fill="#727272"/><rect x="815.1" y="344.9" width="1.2" height="1.2" fill="#797979"/><rect x="813.5" y="340.6" width="1.2" height="1.2" fill="#7a7a7a"/><rect x="830.1" y="341.9" width="1.2" height="1.2" fill="#727272"/><rect x="661.0" y="325.4" width="1.2" height="1.2" fill="#6a6a6a"/><rect x="646.8" y="311.7" width="1.2" height="1.2" fill="#696969"/><rect x="859.9" y="331.9" width="1.2" height="1.2" fill="#6c6c6c"/><rect x="853.6" y="334.1" width="1.2" height="1.2" fill="#646464"/><rect x="849.5" y="332.1" width="1.2" height="1.2" fill="#707070"/><rect x="710.5" y="345.1" width="1.2" height="1.2" fill="#797979"/><rect x="721.2" y="343.0" width="1.2" height="1.2" fill="#787878"/><rect x="651.0" y="324.2" width="1.2" height="1.2" fill="#6a6a6a"/><rect x="759.1" y="348.7" width="1.2" height="1.2" fill="#757575"/><rect x="759.9" y="345.2" width="1.2" height="1.2" fill="#666666"/><rect x="849.2" y="337.2" width="1.2" height="1.2" fill="#6a6a6a"/><rect x="842.7" y="334.0" width="1.2" height="1.2" fill="#646464"/><rect x="804.0" y="347.1" width="1.2" height="1.2" fill="#747474"/><rect x="801.6" y="343.0" width="1.2" height="1.2" fill="#666666"/><rect x="749.0" y="348.4" width="1.2" height="1.2" fill="#7a7a7a"/><rect x="749.1" y="344.4" width="1.2" height="1.2" fill="#7a7a7a"/><rect x="768.9" y="349.0" width="1.2" height="1.2" fill="#686868"/><rect x="862.6" y="330.2" width="1.2" height="1.2" fill="#757575"/><rect x="875.0" y="293.5" width="1.2" height="1.2" fill="#777777"/><rect x="844.2" y="337.8" width="1.2" height="1.2" fill="#656565"/><rect x="839.9" y="335.0" width="1.2" height="1.2" fill="#646464"/><rect x="802.7" y="346.7" width="1.2" height="1.2" fill="#767676"/><rect x="684.8" y="340.2" width="1.2" height="1.2" fill="#6a6a6a"/><rect x="643.8" y="316.9" width="1.2" height="1.2" fill="#646464"/><rect x="866.4" y="328.9" width="1.2" height="1.2" fill="#747474"/><rect x="784.4" y="347.9" width="1.2" height="1.2" fill="#686868"/><rect x="782.9" y="344.1" width="1.2" height="1.2" fill="#6e6e6e"/><rect x="716.5" y="345.4" width="1.2" height="1.2" fill="#6d6d6d"/><rect x="718.3" y="342.1" width="1.2" height="1.2" fill="#6a6a6a"/><rect x="686.8" y="336.5" width="1.2" height="1.2" fill="#6b6b6b"/><rect x="790.4" y="347.4" width="1.2" height="1.2" fill="#797979"/><rect x="789.5" y="344.6" width="1.2" height="1.2" fill="#707070"/><rect x="653.2" y="289.8" width="1.2" height="1.2" fill="#6a6a6a"/><rect x="657.7" y="292.0" width="1.2" height="1.2" fill="#666666"/><rect x="773.3" y="344.7" width="1.2" height="1.2" fill="#666666"/><rect x="797.7" y="346.7" width="1.2" height="1.2" fill="#737373"/><rect x="643.3" y="300.5" width="1.2" height="1.2" fill="#7a7a7a"/><rect x="647.7" y="301.3" width="1.2" height="1.2" fill="#7a7a7a"/><rect x="644.5" y="297.6" width="1.2" height="1.2" fill="#6c6c6c"/><rect x="650.4" y="299.6" width="1.2" height="1.2" fill="#6f6f6f"/><rect x="682.7" y="339.1" width="1.2" height="1.2" fill="#6c6c6c"/><rect x="686.5" y="336.1" width="1.2" height="1.2" fill="#747474"/><rect x="861.5" y="330.8" width="1.2" height="1.2" fill="#6d6d6d"/><rect x="649.0" y="301.4" width="1.2" height="1.2" fill="#676767"/><rect x="779.6" y="349.2" width="1.2" height="1.2" fill="#646464"/><rect x="778.4" y="344.7" width="1.2" height="1.2" fill="#6d6d6d"/><rect x="880.7" y="316.1" width="1.2" height="1.2" fill="#646464"/><rect x="874.9" y="316.2" width="1.2" height="1.2" fill="#777777"/><rect x="691.6" y="340.8" width="1.2" height="1.2" fill="#6d6d6d"/><rect x="833.1" y="336.9" width="1.2" height="1.2" fill="#6e6e6e"/><rect x="880.1" y="317.2" width="1.2" height="1.2" fill="#717171"/><rect x="874.6" y="316.0" width="1.2" height="1.2" fill="#737373"/><rect x="641.1" y="309.7" width="1.2" height="1.2" fill="#6d6d6d"/><rect x="643.1" y="300.4" width="1.2" height="1.2" fill="#7a7a7a"/><rect x="854.9" y="334.2" width="1.2" height="1.2" fill="#757575"/><rect x="850.8" y="332.1" width="1.2" height="1.2" fill="#787878"/><rect x="818.9" y="343.9" width="1.2" height="1.2" fill="#767676"/><rect x="728.6" y="347.6" width="1.2" height="1.2" fill="#656565"/><rect x="647.4" y="294.2" width="1.2" height="1.2" fill="#656565"/><rect x="653.1" y="296.4" width="1.2" height="1.2" fill="#6c6c6c"/><rect x="870.8" y="319.7" width="1.2" height="1.2" fill="#666666"/><rect x="766.7" y="349.4" width="1.2" height="1.2" fill="#747474"/><rect x="767.2" y="345.1" width="1.2" height="1.2" fill="#7a7a7a"/><rect x="873.2" y="318.1" width="1.2" height="1.2" fill="#646464"/><rect x="650.9" y="298.2" width="1.2" height="1.2" fill="#707070"/><rect x="648.5" y="301.0" width="1.2" height="1.2" fill="#6d6d6d"/><rect x="640.9" y="311.1" width="1.2" height="1.2" fill="#6c6c6c"/><rect x="704.6" y="343.5" width="1.2" height="1.2" fill="#717171"/><rect x="657.0" y="323.2" width="1.2" height="1.2" fill="#737373"/><rect x="866.0" y="324.4" width="1.2" height="1.2" fill="#6b6b6b"/><rect x="863.9" y="325.1" width="1.2" height="1.2" fill="#727272"/><rect x="858.3" y="333.1" width="1.2" height="1.2" fill="#676767"/><rect x="854.3" y="331.0" width="1.2" height="1.2" fill="#6d6d6d"/><rect x="745.7" y="348.6" width="1.2" height="1.2" fill="#656565"/><rect x="746.4" y="344.7" width="1.2" height="1.2" fill="#737373"/><rect x="881.2" y="300.0" width="1.2" height="1.2" fill="#747474"/><rect x="875.2" y="301.3" width="1.2" height="1.2" fill="#6b6b6b"/><rect x="793.7" y="348.1" width="1.2" height="1.2" fill="#6d6d6d"/><rect x="793.0" y="343.9" width="1.2" height="1.2" fill="#717171"/><rect x="641.7" y="303.4" width="1.2" height="1.2" fill="#717171"/><rect x="641.2" y="306.3" width="1.2" height="1.2" fill="#747474"/><rect x="646.3" y="306.5" width="1.2" height="1.2" fill="#777777"/><rect x="881.2" y="314.7" width="1.2" height="1.2" fill="#6e6e6e"/><rect x="876.4" y="313.3" width="1.2" height="1.2" fill="#656565"/><rect x="782.6" y="348.3" width="1.2" height="1.2" fill="#6c6c6c"/><rect x="879.7" y="299.2" width="1.2" height="1.2" fill="#727272"/><rect x="652.4" y="290.6" width="1.2" height="1.2" fill="#787878"/><rect x="657.5" y="292.4" width="1.2" height="1.2" fill="#666666"/><rect x="670.5" y="335.0" width="1.2" height="1.2" fill="#646464"/><rect x="675.5" y="332.7" width="1.2" height="1.2" fill="#777777"/><rect x="768.3" y="349.5" width="1.2" height="1.2" fill="#676767"/><rect x="767.7" y="345.3" width="1.2" height="1.2" fill="#747474"/><rect x="876.2" y="320.8" width="1.2" height="1.2" fill="#6a6a6a"/><rect x="871.4" y="319.7" width="1.2" height="1.2" fill="#6e6e6e"/><rect x="873.7" y="324.3" width="1.2" height="1.2" fill="#666666"/><rect x="868.2" y="323.0" width="1.2" height="1.2" fill="#727272"/><rect x="693.0" y="338.1" width="1.2" height="1.2" fill="#797979"/><rect x="881.4" y="302.1" width="1.2" height="1.2" fill="#777777"/><rect x="685.9" y="339.5" width="1.2" height="1.2" fill="#666666"/><rect x="689.8" y="336.5" width="1.2" height="1.2" fill="#7a7a7a"/><rect x="811.0" y="341.0" width="1.2" height="1.2" fill="#707070"/><rect x="871.9" y="325.2" width="1.2" height="1.2" fill="#717171"/><rect x="866.5" y="324.2" width="1.2" height="1.2" fill="#787878"/><rect x="813.7" y="345.4" width="1.2" height="1.2" fill="#6f6f6f"/><rect x="810.8" y="341.7" width="1.2" height="1.2" fill="#757575"/><rect x="805.6" y="346.5" width="1.2" height="1.2" fill="#767676"/><rect x="804.4" y="343.0" width="1.2" height="1.2" fill="#6c6c6c"/><rect x="658.3" y="328.6" width="1.2" height="1.2" fill="#787878"/><rect x="765.2" y="349.6" width="1.2" height="1.2" fill="#797979"/><rect x="764.7" y="344.9" width="1.2" height="1.2" fill="#747474"/><rect x="733.7" y="347.7" width="1.2" height="1.2" fill="#717171"/><rect x="882.0" y="302.3" width="1.2" height="1.2" fill="#6a6a6a"/><rect x="876.0" y="302.5" width="1.2" height="1.2" fill="#757575"/><rect x="755.2" y="348.8" width="1.2" height="1.2" fill="#6d6d6d"/><rect x="648.7" y="316.5" width="1.2" height="1.2" fill="#787878"/><rect x="654.8" y="322.0" width="1.2" height="1.2" fill="#646464"/><rect x="686.7" y="340.3" width="1.2" height="1.2" fill="#6f6f6f"/><rect x="832.7" y="337.0" width="1.2" height="1.2" fill="#727272"/><rect x="647.3" y="303.5" width="1.2" height="1.2" fill="#757575"/><rect x="866.5" y="323.9" width="1.2" height="1.2" fill="#727272"/><rect x="640.6" y="308.4" width="1.2" height="1.2" fill="#696969"/><rect x="646.6" y="308.1" width="1.2" height="1.2" fill="#6e6e6e"/><rect x="641.1" y="310.4" width="1.2" height="1.2" fill="#7a7a7a"/><rect x="684.9" y="335.7" width="1.2" height="1.2" fill="#737373"/><rect x="716.1" y="341.4" width="1.2" height="1.2" fill="#7a7a7a"/><rect x="707.4" y="344.3" width="1.2" height="1.2" fill="#797979"/><rect x="710.4" y="340.8" width="1.2" height="1.2" fill="#757575"/><rect x="874.3" y="293.8" width="1.2" height="1.2" fill="#6d6d6d"/><rect x="869.2" y="294.5" width="1.2" height="1.2" fill="#767676"/><rect x="878.9" y="317.5" width="1.2" height="1.2" fill="#797979"/><rect x="873.8" y="317.5" width="1.2" height="1.2" fill="#777777"/><rect x="649.0" y="322.1" width="1.2" height="1.2" fill="#707070"/><rect x="653.6" y="321.0" width="1.2" height="1.2" fill="#767676"/><rect x="870.4" y="325.5" width="1.2" height="1.2" fill="#656565"/><rect x="854.7" y="334.9" width="1.2" height="1.2" fill="#797979"/><rect x="849.9" y="332.5" width="1.2" height="1.2" fill="#666666"/><rect x="811.2" y="346.1" width="1.2" height="1.2" fill="#6a6a6a"/><rect x="808.2" y="342.4" width="1.2" height="1.2" fill="#757575"/><rect x="796.8" y="347.0" width="1.2" height="1.2" fill="#6f6f6f"/><rect x="875.9" y="302.5" width="1.2" height="1.2" fill="#787878"/><rect x="659.9" y="330.2" width="1.2" height="1.2" fill="#767676"/><rect x="717.7" y="346.2" width="1.2" height="1.2" fill="#6b6b6b"/><rect x="872.2" y="324.8" width="1.2" height="1.2" fill="#767676"/><rect x="708.2" y="345.2" width="1.2" height="1.2" fill="#777777"/><rect x="710.7" y="340.9" width="1.2" height="1.2" fill="#757575"/><rect x="750.8" y="345.2" width="1.2" height="1.2" fill="#6b6b6b"/><rect x="656.8" y="329.0" width="1.2" height="1.2" fill="#686868"/><rect x="646.2" y="305.5" width="1.2" height="1.2" fill="#797979"/><rect x="878.4" y="297.3" width="1.2" height="1.2" fill="#6c6c6c"/><rect x="873.4" y="297.9" width="1.2" height="1.2" fill="#787878"/><rect x="647.0" y="295.5" width="1.2" height="1.2" fill="#797979"/><rect x="652.1" y="296.5" width="1.2" height="1.2" fill="#707070"/><rect x="814.0" y="340.9" width="1.2" height="1.2" fill="#707070"/><rect x="882.4" y="309.6" width="1.2" height="1.2" fill="#777777"/><rect x="877.2" y="309.2" width="1.2" height="1.2" fill="#767676"/><rect x="698.2" y="339.2" width="1.2" height="1.2" fill="#787878"/><rect x="730.2" y="347.9" width="1.2" height="1.2" fill="#666666"/><rect x="732.5" y="343.3" width="1.2" height="1.2" fill="#707070"/><rect x="873.7" y="298.6" width="1.2" height="1.2" fill="#646464"/><rect x="862.1" y="326.1" width="1.2" height="1.2" fill="#6e6e6e"/><rect x="715.4" y="341.7" width="1.2" height="1.2" fill="#6a6a6a"/><rect x="785.6" y="348.2" width="1.2" height="1.2" fill="#666666"/><rect x="785.1" y="344.1" width="1.2" height="1.2" fill="#686868"/><rect x="816.0" y="340.4" width="1.2" height="1.2" fill="#777777"/><rect x="853.1" y="334.7" width="1.2" height="1.2" fill="#7a7a7a"/><rect x="642.5" y="301.8" width="1.2" height="1.2" fill="#6d6d6d"/><rect x="648.0" y="303.0" width="1.2" height="1.2" fill="#7a7a7a"/><rect x="641.2" y="312.0" width="1.2" height="1.2" fill="#676767"/><rect x="641.6" y="312.3" width="1.2" height="1.2" fill="#767676"/><rect x="757.2" y="159.9" width="1" height="1" fill="#828282"/><rect x="806.3" y="228.1" width="1" height="1" fill="#777777"/><rect x="768.9" y="156.7" width="1" height="1" fill="#757575"/><rect x="777.5" y="133.7" width="1" height="1" fill="#747474"/><rect x="773.7" y="188.2" width="1" height="1" fill="#797979"/><rect x="774.2" y="168.1" width="1" height="1" fill="#797979"/><rect x="776.3" y="158.2" width="1" height="1" fill="#737373"/><rect x="763.2" y="157.3" width="1" height="1" fill="#797979"/><rect x="752.4" y="207.6" width="1" height="1" fill="#7f7f7f"/><rect x="757.5" y="210.2" width="1" height="1" fill="#737373"/><rect x="774.4" y="130.7" width="1" height="1" fill="#7d7d7d"/><rect x="766.5" y="225.4" width="1" height="1" fill="#838383"/><rect x="734.6" y="224.8" width="1" height="1" fill="#7a7a7a"/><rect x="738.4" y="254.2" width="1" height="1" fill="#818181"/><rect x="812.7" y="264.2" width="1" height="1" fill="#808080"/><rect x="771.7" y="158.3" width="1" height="1" fill="#7a7a7a"/><rect x="780.6" y="166.3" width="1" height="1" fill="#818181"/><rect x="777.3" y="206.9" width="1" height="1" fill="#797979"/><rect x="771.9" y="132.6" width="1" height="1" fill="#747474"/><rect x="789.1" y="185.9" width="1" height="1" fill="#848484"/><rect x="775.4" y="241.5" width="1" height="1" fill="#7e7e7e"/><rect x="719.9" y="284.2" width="1" height="1" fill="#767676"/><rect x="730.1" y="278.0" width="1" height="1" fill="#7b7b7b"/><rect x="773.0" y="233.1" width="1" height="1" fill="#7e7e7e"/><rect x="721.0" y="279.4" width="1" height="1" fill="#737373"/><rect x="743.6" y="195.7" width="1" height="1" fill="#787878"/><rect x="735.0" y="263.5" width="1" height="1" fill="#7e7e7e"/><rect x="772.1" y="133.1" width="1" height="1" fill="#7e7e7e"/><rect x="755.5" y="275.3" width="1" height="1" fill="#7e7e7e"/><rect x="774.6" y="269.1" width="1" height="1" fill="#7a7a7a"/><rect x="786.9" y="265.4" width="1" height="1" fill="#7d7d7d"/><rect x="781.4" y="161.7" width="1" height="1" fill="#808080"/><rect x="738.3" y="194.3" width="1" height="1" fill="#828282"/><rect x="767.2" y="263.4" width="1" height="1" fill="#838383"/><rect x="761.3" y="138.2" width="1" height="1" fill="#848484"/><rect x="772.2" y="133.7" width="1" height="1" fill="#767676"/><rect x="802.2" y="288.3" width="1" height="1" fill="#7c7c7c"/><rect x="771.7" y="123.3" width="1" height="1" fill="#808080"/><rect x="759.0" y="254.7" width="1" height="1" fill="#828282"/><rect x="788.6" y="277.3" width="1" height="1" fill="#7e7e7e"/><rect x="759.3" y="124.5" width="1" height="1" fill="#7f7f7f"/><rect x="800.9" y="206.0" width="1" height="1" fill="#777777"/><rect x="773.2" y="189.9" width="1" height="1" fill="#767676"/><rect x="789.0" y="218.4" width="1" height="1" fill="#818181"/><rect x="753.8" y="226.9" width="1" height="1" fill="#7f7f7f"/><rect x="739.4" y="269.9" width="1" height="1" fill="#737373"/><rect x="763.1" y="110.6" width="1" height="1" fill="#777777"/><rect x="757.9" y="133.8" width="1" height="1" fill="#757575"/><rect x="744.0" y="212.0" width="1" height="1" fill="#7d7d7d"/><rect x="775.4" y="190.3" width="1" height="1" fill="#747474"/><rect x="748.8" y="160.6" width="1" height="1" fill="#777777"/><rect x="744.1" y="186.5" width="1" height="1" fill="#848484"/><rect x="772.2" y="116.7" width="1" height="1" fill="#828282"/><rect x="792.7" y="182.3" width="1" height="1" fill="#797979"/><rect x="809.1" y="259.1" width="1" height="1" fill="#787878"/><rect x="756.5" y="194.7" width="1" height="1" fill="#808080"/><rect x="774.4" y="147.5" width="1" height="1" fill="#757575"/><rect x="749.1" y="185.5" width="1" height="1" fill="#818181"/><rect x="755.1" y="221.2" width="1" height="1" fill="#808080"/><rect x="799.9" y="272.6" width="1" height="1" fill="#747474"/><rect x="743.8" y="257.0" width="1" height="1" fill="#848484"/><rect x="772.1" y="202.7" width="1" height="1" fill="#7c7c7c"/><rect x="771.2" y="154.8" width="1" height="1" fill="#7d7d7d"/><rect x="778.7" y="267.4" width="1" height="1" fill="#7b7b7b"/><rect x="754.2" y="246.7" width="1" height="1" fill="#808080"/><rect x="813.3" y="266.4" width="1" height="1" fill="#7a7a7a"/><rect x="745.2" y="193.4" width="1" height="1" fill="#767676"/><rect x="758.8" y="151.6" width="1" height="1" fill="#808080"/><rect x="778.5" y="199.3" width="1" height="1" fill="#7e7e7e"/><rect x="753.4" y="145.7" width="1" height="1" fill="#7a7a7a"/></g>
 <circle cx="628" cy="84" r="6.5" fill="#f4e8ea"/>
 <circle cx="628" cy="84" r="5.2" fill="#cf2a3a"/>
 <circle cx="628" cy="704" r="6.5" fill="#f4e8ea"/>
 <circle cx="628" cy="704" r="5.2" fill="#cf2a3a"/>
 </g>
</svg>
<div class="a" style="left:1066px;top:84px;width:1px;height:620px;background:#e2e2e2"></div>
<div class="a" style="left:1067px;top:84px;width:3px;height:621px;background:#2e2e2e"></div><div class="a" style="left:1070px;top:84px;width:1px;height:621px;background:#5a5a5a"></div>
<svg class="a" style="left:1068px;top:385px" width="5" height="16"><rect x="0.5" y="1" width="1.2" height="1.2" fill="#fff"/><rect x="0.5" y="3" width="1.2" height="1.2" fill="#fff"/><rect x="0.5" y="5" width="1.2" height="1.2" fill="#fff"/><rect x="0.5" y="7" width="1.2" height="1.2" fill="#fff"/><rect x="0.5" y="9" width="1.2" height="1.2" fill="#fff"/><rect x="0.5" y="11" width="1.2" height="1.2" fill="#fff"/><rect x="0.5" y="13" width="1.2" height="1.2" fill="#fff"/><rect x="2.5" y="2" width="1.2" height="1.2" fill="#fff"/><rect x="2.5" y="4" width="1.2" height="1.2" fill="#fff"/><rect x="2.5" y="6" width="1.2" height="1.2" fill="#fff"/><rect x="2.5" y="8" width="1.2" height="1.2" fill="#fff"/><rect x="2.5" y="10" width="1.2" height="1.2" fill="#fff"/><rect x="2.5" y="12" width="1.2" height="1.2" fill="#fff"/></svg>

<!-- ===== bottom panel ===== -->
<div class="a" style="left:176px;top:703px;width:891px;height:1px;background:#e4e4e4"></div>
<div class="a" style="left:176px;top:704px;width:898px;height:65px;background:#464646"></div>
<div class="a" style="left:176px;top:704px;width:898px;height:3px;background:#2e2e2e"></div>
<div class="a" style="left:176px;top:707px;width:898px;height:1px;background:#555"></div>
<svg class="a" style="left:808px;top:705px" width="16" height="5"><rect x="1" y="1" width="1.2" height="1.2" fill="#fff"/><rect x="3" y="1" width="1.2" height="1.2" fill="#fff"/><rect x="5" y="1" width="1.2" height="1.2" fill="#fff"/><rect x="7" y="1" width="1.2" height="1.2" fill="#fff"/><rect x="9" y="1" width="1.2" height="1.2" fill="#fff"/><rect x="11" y="1" width="1.2" height="1.2" fill="#fff"/><rect x="13" y="1" width="1.2" height="1.2" fill="#fff"/><rect x="2" y="3" width="1.2" height="1.2" fill="#fff"/><rect x="4" y="3" width="1.2" height="1.2" fill="#fff"/><rect x="6" y="3" width="1.2" height="1.2" fill="#fff"/><rect x="8" y="3" width="1.2" height="1.2" fill="#fff"/><rect x="10" y="3" width="1.2" height="1.2" fill="#fff"/><rect x="12" y="3" width="1.2" height="1.2" fill="#fff"/></svg>
<div class="a" style="left:176px;top:708px;width:2px;height:61px;background:#3a3a3a"></div>
<div class="a" style="left:180px;top:714px;width:68px;height:55px;background:#f2f2f2;overflow:hidden">
 <div class="a" style="left:3px;top:4px;width:62px;height:26px;background:linear-gradient(#dedede,#e4e4e4)"></div>
 <div class="t" style="left:3px;top:6px;font-size:10.5px;color:#fff">Snapshot_01</div>
 <div class="a" style="left:3px;top:30px;width:62px;height:30px;background:#c6c6c6"></div>
 <svg class="a" style="left:3px;top:30px" width="62" height="30"><polygon points="13.3,22.7 28.9,16.2 46.5,22.7 40,30 20,30" fill="#8c8c8c"/></svg>
</div>
<div class="a" style="left:253px;top:714px;width:68px;height:55px;background:#f2f2f2;overflow:hidden">
 <div class="a" style="left:3px;top:4px;width:62px;height:26px;background:linear-gradient(#dedede,#e4e4e4)"></div>
 <div class="t" style="left:3px;top:6px;font-size:10.5px;color:#fff">Snapshot_02</div>
 <div class="a" style="left:3px;top:30px;width:62px;height:30px;background:#c6c6c6"></div>
 <svg class="a" style="left:3px;top:30px" width="62" height="30"><polygon points="12.6,13.6 28.3,9 35.5,10.3 37.7,4.8 40.2,11 47.8,14.6 32.2,22 27,20 25.5,23 22.5,19" fill="#878787"/></svg>
</div>

<!-- ===== Photo viewer ===== -->
<div class="a" style="left:0;top:88px;width:300px;height:519px;background:#1b1919;box-shadow:0 1px 11px rgba(0,0,0,0.2)"></div>
<div class="t" style="left:4px;top:98px;font-size:12px;color:#fff">Средство просмотра фото...</div>
<div class="a" style="left:0;top:118px;width:300px;height:30px;background:linear-gradient(#f4f8fc,#dde8f3)"></div>
<div class="a" style="left:0;top:148px;width:295px;height:400px;background:radial-gradient(circle at 20px 122px,#000000 0px,#010101 3px,#040404 6px,#090909 9px,#0f0f0f 12px,#171717 15px,#1f1f1f 18px,#292929 21px,#323232 24px,#3c3c3c 27px,#454545 30px,#4e4e4e 33px,#565656 36px,#5e5e5e 39px,#646464 42px,#6a6a6a 45px,#6f6f6f 48px,#737373 51px,#767676 54px,#787878 57px,#7a7a7a 60px,#7c7c7c 63px,#7d7d7d 66px,#7e7e7e 69px,#7f7f7f 72px,#7f7f7f 75px,#7f7f7f 78px,#808080 81px,#808080 84px,rgba(128,128,128,0) 85px),radial-gradient(circle at 168px 287px,#fafafa 0px,#f9f9f9 3px,#f7f7f7 6px,#f3f3f3 9px,#efefef 12px,#e9e9e9 15px,#e2e2e2 18px,#dadada 21px,#d2d2d2 24px,#cacaca 27px,#c2c2c2 30px,#bababa 33px,#b2b2b2 36px,#ababab 39px,#a4a4a4 42px,#9e9e9e 45px,#999999 48px,#949494 51px,#919191 54px,#8d8d8d 57px,#8a8a8a 60px,#888888 63px,#868686 66px,#858585 69px,#838383 72px,#838383 75px,#828282 78px,#818181 81px,#818181 84px,#818181 87px,#808080 90px,rgba(128,128,128,0) 91px),#808080"></div>
<div class="a" style="left:295px;top:148px;width:4px;height:400px;background:#fff"></div>
<!-- window controls -->
<div class="a" style="left:180px;top:103px;width:10px;height:1px;background:#fff"></div>
<div class="a" style="left:225px;top:98px;width:10px;height:10px;border:1px solid #fff"></div>
<svg class="a" style="left:270px;top:97px" width="12" height="12"><path d="M1 1L11 11M11 1L1 11" stroke="#fff" stroke-width="1.1"/></svg>
<!-- toolbar -->
<div class="a" style="left:0;top:147px;width:299px;height:1px;background:#b8c6d4"></div>
<div class="t" style="left:-3px;top:128px;font-size:12px;color:#1a1a1a">ь</div>
<svg class="a" style="left:13px;top:131px" width="7" height="4"><polygon points="0,0 7,0 3.5,4" fill="#111"/></svg>
<div class="t" style="left:35px;top:128px;font-size:11.6px;color:#1a1a1a">Эл. почта</div>
<div class="t" style="left:106px;top:128px;font-size:12px;color:#1a1a1a">Запись</div>
<svg class="a" style="left:153px;top:131px" width="7" height="4"><polygon points="0,0 7,0 3.5,4" fill="#111"/></svg>
<div class="t" style="left:248px;top:127px;font-size:11px;color:#fff;opacity:.8">»</div>
<svg class="a" style="left:272px;top:123px" width="18" height="18">
 <defs><radialGradient id="hg" cx="0.4" cy="0.35" r="0.7"><stop offset="0" stop-color="#5a7fd8"/><stop offset="1" stop-color="#0e2c8a"/></radialGradient></defs>
 <circle cx="9" cy="9" r="8.2" fill="#dfe6f5" stroke="#2a3f8a" stroke-width="0.8"/>
 <circle cx="9" cy="9" r="6.8" fill="url(#hg)"/>
 <text x="9" y="13.2" font-size="11" font-weight="bold" fill="#fff" text-anchor="middle" font-family="Liberation Sans">?</text>
</svg>
<!-- bottom bar -->
<div class="a" style="left:0;top:546px;width:296px;height:2px;background:#a8a8a8"></div>
<div class="a" style="left:0;top:548px;width:300px;height:58px;background:#1b1919"></div>
<div class="a" style="left:-30px;top:564px;width:327px;height:33px;border-radius:0 16px 16px 0;background:linear-gradient(#505050,#4a4a4a 50%,#424242);border-top:1px solid #6a6a6a;border-bottom:1px solid #6a6a6a;border-right:1px solid #5a5a5a"></div>
<div class="a" style="left:23px;top:568px;width:58px;height:25px;border-radius:7px;background:linear-gradient(#a8acb0,#8a8e92 40%,#4a4e52 52%,#36393c 85%,#707478);border:1px solid #9a9ea2"></div>
<div class="a" style="left:110px;top:568px;width:58px;height:25px;border-radius:7px;background:linear-gradient(#a8acb0,#8a8e92 40%,#4a4e52 52%,#36393c 85%,#707478);border:1px solid #9a9ea2"></div>
<svg class="a" style="left:37px;top:572px" width="22" height="18"><rect x="2.5" y="2" width="4" height="13" rx="1.5" fill="#1a4ec8" stroke="#c8d8f0" stroke-width=".9"/><path d="M18 2.5 V14.5 L7.5 8.5 Z" fill="#1a50d0" stroke="#c8d8f0" stroke-width=".9" stroke-linejoin="round"/></svg>
<svg class="a" style="left:133px;top:572px" width="22" height="18"><path d="M2.5 2.5 V14.5 L13 8.5 Z" fill="#1a50d0" stroke="#c8d8f0" stroke-width=".9" stroke-linejoin="round"/><rect x="13.5" y="2" width="4" height="13" rx="1.5" fill="#1a4ec8" stroke="#c8d8f0" stroke-width=".9"/></svg>
<svg class="a" style="left:71px;top:556px" width="49" height="49">
 <defs><linearGradient id="bg1" x1="0" y1="0" x2="0" y2="1"><stop offset="0" stop-color="#b0b8f0"/><stop offset=".2" stop-color="#8090e0"/><stop offset=".46" stop-color="#4050c8"/><stop offset=".5" stop-color="#0818a8"/><stop offset=".72" stop-color="#1050e0"/><stop offset="1" stop-color="#40c0ff"/></linearGradient></defs>
 <circle cx="24.5" cy="24.5" r="23.5" fill="#2e2e32"/>
 <circle cx="24.5" cy="24.5" r="22" fill="#48484e"/>
 <circle cx="24.5" cy="24.5" r="20" fill="url(#bg1)"/>
 <rect x="13.5" y="15" width="22" height="19" rx="1.5" fill="#f0f0f0" stroke="#b8c0c8" stroke-width=".6"/>
 <rect x="16.5" y="19" width="16" height="10" fill="#8cc0c8"/>
 <path d="M16.5 29 V22 Q20 21 23 25 Q27 27 32.5 26 V29 Z" fill="#3a8048"/>
</svg>
<svg class="a" style="left:183px;top:568px" width="20" height="22"><path d="M9 6.5 A6 6 0 1 1 3.5 16" fill="none" stroke="#d8e0ff" stroke-width="5.2" stroke-linecap="round"/><path d="M9 6.5 A6 6 0 1 1 3.5 16" fill="none" stroke="#0a1a90" stroke-width="3" stroke-linecap="round"/><path d="M1.5 6.5 L9.5 1.5 L9.5 11.5 Z" fill="#2068e0" stroke="#c8e0ff" stroke-width="1.1" stroke-linejoin="round"/></svg>
<svg class="a" style="left:215px;top:568px" width="20" height="22"><path d="M11 6.5 A6 6 0 1 0 16.5 16" fill="none" stroke="#d8e0ff" stroke-width="5.2" stroke-linecap="round"/><path d="M11 6.5 A6 6 0 1 0 16.5 16" fill="none" stroke="#0a1a90" stroke-width="3" stroke-linecap="round"/><path d="M18.5 6.5 L10.5 1.5 L10.5 11.5 Z" fill="#2068e0" stroke="#c8e0ff" stroke-width="1.1" stroke-linejoin="round"/></svg>
<div class="a" style="left:249px;top:569px;width:1px;height:22px;background:#3a3a3a"></div>
<div class="a" style="left:250px;top:569px;width:1px;height:22px;background:#6e6e6e"></div>
<svg class="a" style="left:262px;top:570px" width="20" height="20"><path d="M3.5 3.5L16 16M16 3.5L3.5 16" stroke="#8e8686" stroke-width="4.2" stroke-linecap="round"/><path d="M3.5 3.5L16 16M16 3.5L3.5 16" stroke="#4a3e42" stroke-width="2" stroke-linecap="round"/></svg>
</body></html>
